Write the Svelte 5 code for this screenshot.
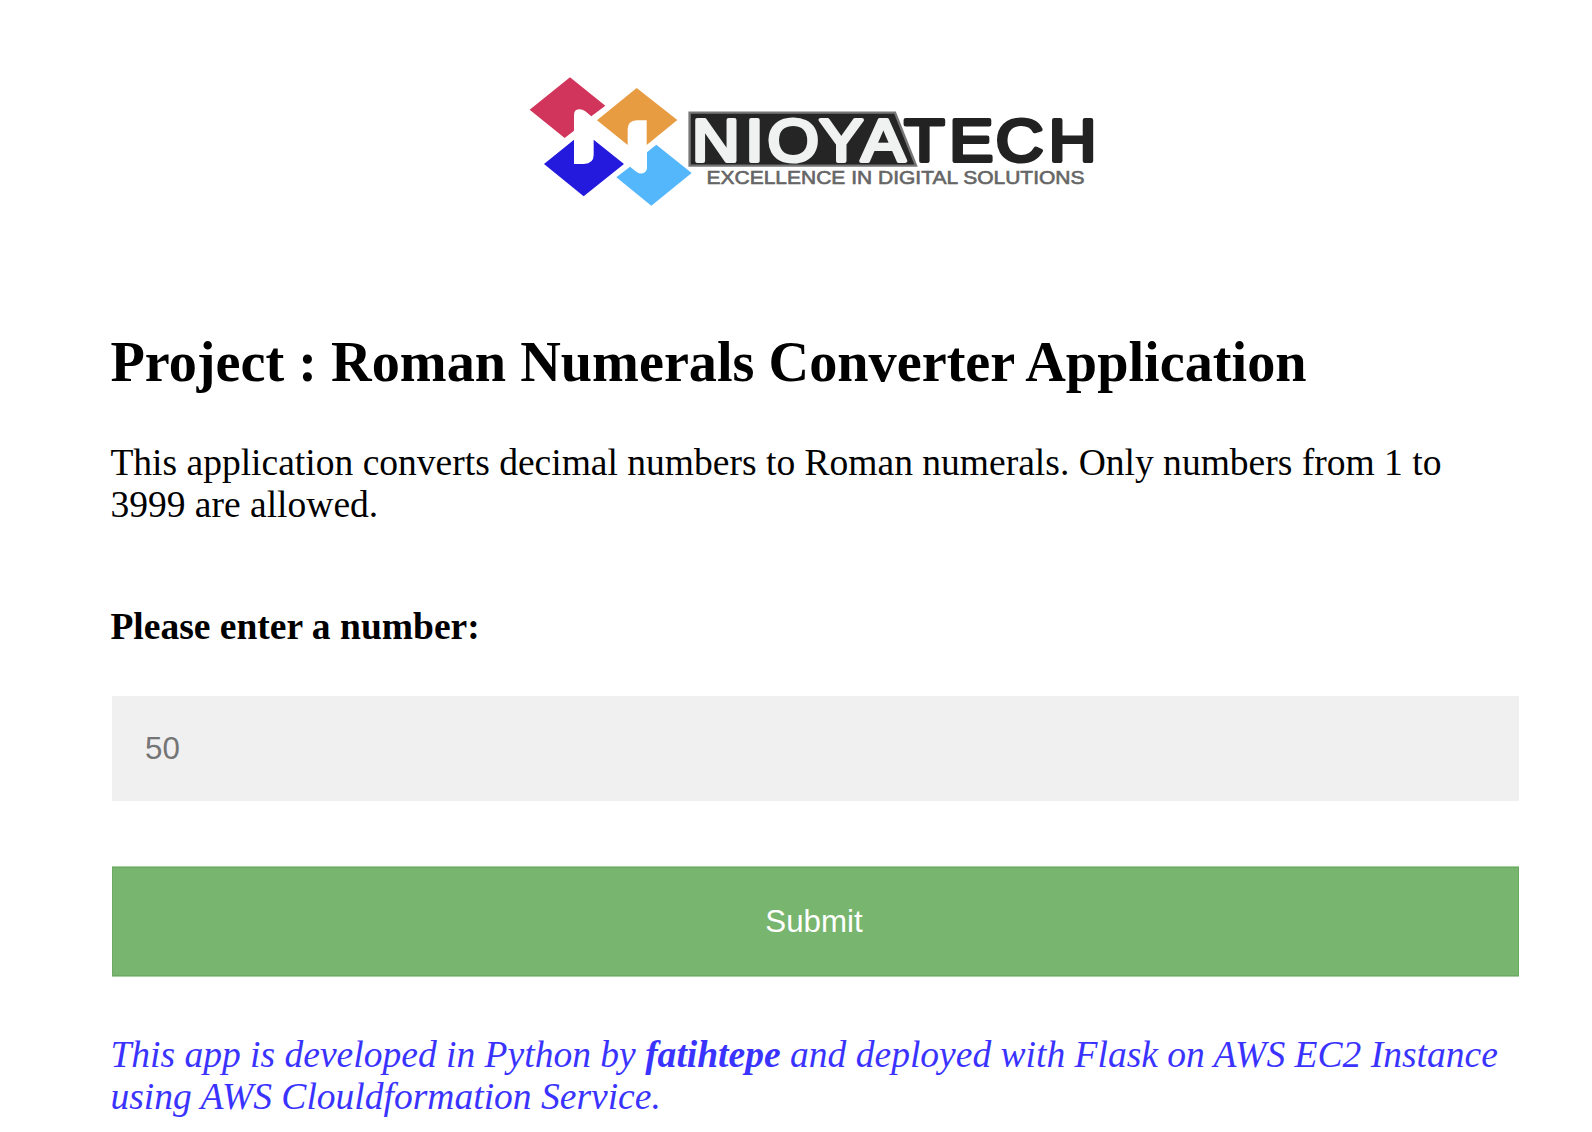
<script>
  let number = $state('');
</script>

<main>
  <svg class="logo" viewBox="520 65 590 150" role="img" aria-label="Nioyatech">
    <g transform="translate(520 65) scale(.33333)">
      <path fill="#d1355b" d="M150 37 256 122 214 154 196 139Q181 128 167 136 162 141 162 150V197L134 219 29 134Z" />
      <path fill="#e79c42" d="M350 69 472 165 380 240V166H350Q323 168 323 192V240L231 166Z" />
      <path fill="#241add" d="M72 297 162 224V297H192Q221 295 221 270V224L312 297 191 394Z" />
      <path fill="#55b7fb" d="M409 239 515 324 394 422 289 337 330 305 350 321Q363 330 375 322 381 317 381 310V262Z" />
    </g>
    <path d="M689.6 112.6H895L916 165.6H689.6Z" fill="#252525" stroke="#777" stroke-width="2.4" />
    <g class="word" transform="scale(1.1 1)">
      <text class="light" x="629.2 677.4 697.8 744.8 783" y="160.7">NIOYA</text>
      <text class="dark" x="822.1 863 905.3 953.4" y="160.7">TECH</text>
    </g>
    <text class="tagline" x="706.5" y="183.8" textLength="378" lengthAdjust="spacingAndGlyphs">EXCELLENCE IN DIGITAL SOLUTIONS</text>
  </svg>

  <h1>Project : Roman Numerals Converter Application</h1>
  <p class="intro">This application converts decimal numbers to Roman numerals. Only numbers from 1 to<br />3999 are allowed.</p>

  <form onsubmit={(event) => event.preventDefault()}>
    <label for="number">Please enter a number:</label>
    <input id="number" type="text" placeholder="50" bind:value={number} />
    <button type="submit">Submit</button>
  </form>

  <p class="credit">This app is developed in Python by <b>fatihtepe</b> and deployed with Flask on AWS EC2 Instance<br />using AWS Clouldformation Service.</p>
</main>

<style>
  :global(body) {
    margin: 0;
    background: #fff;
  }
  main {
    box-sizing: border-box;
    height: 1132px;
    overflow: hidden;
    padding: 65px 73px 0 110.4px;
    display: flex;
    flex-direction: column;
    font: 37.54px/42px "Liberation Serif", serif;
    color: #000;
  }
  .logo {
    width: 590px;
    height: 150px;
    margin-left: 409.6px;
    flex: none;
  }
  .word text {
    font: 60px "Liberation Sans", sans-serif;
    stroke-width: 3.9;
    stroke-linejoin: round;
  }
  .light {
    fill: #f0f2f1;
    stroke: #f0f2f1;
  }
  .dark {
    fill: #222;
    stroke: #222;
  }
  .tagline {
    font: 18px "Liberation Sans", sans-serif;
    fill: #666;
    stroke: #666;
    stroke-width: 0.6;
  }
  h1 {
    margin: 115px 0 0;
    font-size: 56.26px;
    line-height: 64px;
    white-space: nowrap;
  }
  p {
    margin: 0;
    white-space: nowrap;
  }
  .intro {
    margin-top: 48px;
  }
  form {
    display: flex;
    flex-direction: column;
    margin-top: 80px;
  }
  label {
    font-weight: bold;
  }
  input,
  button {
    box-sizing: border-box;
    width: 1407px;
    margin-left: 1.6px;
    border: 0;
    border-radius: 0;
    font: 31.3px "Liberation Sans", sans-serif;
  }
  input {
    height: 105px;
    margin-top: 48px;
    padding: 0 33px;
    background: #f0f0f0;
  }
  input::placeholder {
    color: #757575;
    opacity: 1;
  }
  button {
    height: 111px;
    margin-top: 65px;
    padding: 1px 3px 0 0;
    border: solid #a9d0a3;
    border-width: 1px 0;
    background: #78b56e;
    box-shadow: inset 0 0 0 1px #69ac60;
    color: #fff;
  }
  .credit {
    margin-top: 57px;
    color: #3a33ff;
    font-style: italic;
  }
</style>
